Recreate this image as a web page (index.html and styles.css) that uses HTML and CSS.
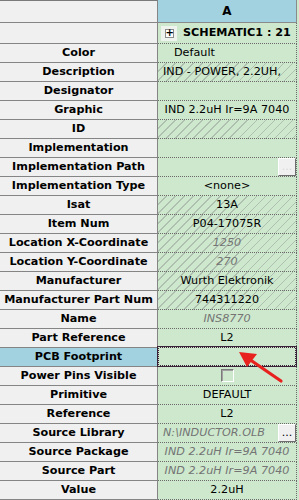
FILE: index.html
```html
<!DOCTYPE html>
<html lang="en">

<head>
	<meta charset="utf-8">
	<meta name="viewport" content="width=device-width, initial-scale=1.0">
	<title>Property Editor</title>
	<link rel="stylesheet" href="styles.css">
</head>

<body>
	<main class="sheet">
		<!-- column header -->
		<div class="name head"></div>
		<div class="val head">A</div>

		<!-- part row -->
		<div class="name part"></div>
		<div class="val part">
			<span class="expand"><span class="plus">+</span></span>
			<b>SCHEMATIC1 : 21</b>
		</div>

		<div class="name">Color</div>
		<div class="val left">Default</div>
		<div class="name">Description</div>
		<div class="val hatch desc">IND - POWER, 2.2UH,</div>
		<div class="name">Designator</div>
		<div class="val"></div>
		<div class="name">Graphic</div>
		<div class="val">IND 2.2uH Ir=9A 7040</div>
		<div class="name">ID</div>
		<div class="val hatch"></div>
		<div class="name">Implementation</div>
		<div class="val"></div>
		<div class="name">Implementation Path</div>
		<div class="val tool"><span class="text"></span><button class="dots off">...</button></div>
		<div class="name">Implementation Type</div>
		<div class="val">&lt;none&gt;</div>
		<div class="name">Isat</div>
		<div class="val hatch">13A</div>
		<div class="name">Item Num</div>
		<div class="val hatch">P04-17075R</div>
		<div class="name">Location X-Coordinate</div>
		<div class="val hatch grey">1250</div>
		<div class="name">Location Y-Coordinate</div>
		<div class="val hatch grey">270</div>
		<div class="name">Manufacturer</div>
		<div class="val hatch">Wurth Elektronik</div>
		<div class="name">Manufacturer Part Num</div>
		<div class="val hatch">744311220</div>
		<div class="name">Name</div>
		<div class="val grey">INS8770</div>
		<div class="name">Part Reference</div>
		<div class="val">L2</div>
		<div class="name selected">PCB Footprint</div>
		<div class="val focus"></div>
		<div class="name">Power Pins Visible</div>
		<div class="val"><span class="check"></span></div>
		<div class="name">Primitive</div>
		<div class="val">DEFAULT</div>
		<div class="name">Reference</div>
		<div class="val">L2</div>
		<div class="name">Source Library</div>
		<div class="val tool grey"><span class="text">N:\INDUCTOR.OLB</span><button class="dots">...</button></div>
		<div class="name">Source Package</div>
		<div class="val grey">IND 2.2uH Ir=9A 7040</div>
		<div class="name">Source Part</div>
		<div class="val grey">IND 2.2uH Ir=9A 7040</div>
		<div class="name">Value</div>
		<div class="val">2.2uH</div>
	</main>

	<!-- annotation arrow -->
	<svg class="arrow" width="299" height="500" viewBox="0 0 299 500">
		<line x1="281" y1="381" x2="249" y2="359" stroke="#e8231f" stroke-width="3.2" stroke-linecap="round" />
		<polygon points="239,352 257,354 247,367" fill="#e8231f" />
	</svg>
</body>

</html>
```

FILE: styles.css
```css
* {
	margin: 0;
	box-sizing: border-box;
}

body {
	width: 299px;
	height: 500px;
	overflow: hidden;
	background-color: #cde8cd;
	font-family: "DejaVu Sans", Verdana, sans-serif;
	font-size: 11.2px;
	color: #000;
	position: relative;
}

.sheet {
	display: grid;
	grid-template-columns: 158px 139px;
	grid-template-rows: 23px 21px;
	grid-auto-rows: 19px;
}

.name {
	background-color: #f0f0f0;
	border-right: 1px solid #858585;
	border-bottom: 1px solid #858585;
	font-weight: bold;
	text-align: center;
	line-height: 18px;
	white-space: nowrap;
	overflow: hidden;
}

.val {
	border-right: 1px dotted #6a6a6a;
	border-bottom: 1px dotted #6a6a6a;
	padding: 0 5px;
	text-align: center;
	line-height: 18px;
	white-space: nowrap;
	overflow: hidden;
}

.name.head {
	border-top: 1px solid #7a7a7a;
}

.val.head {
	background-color: #a2d1df;
	border-bottom: 1px solid #8a8a8a;
	border-right: 1px solid #8a8a8a;
	font-weight: bold;
	font-size: 12px;
	line-height: 22px;
}

.part {
	line-height: 20px;
}

.val.part {
	display: flex;
	align-items: center;
	padding: 0 0 0 3px;
	gap: 6px;
}

.expand {
	width: 16px;
	height: 15px;
	background-color: #eef3ee;
	display: flex;
	align-items: center;
	justify-content: center;
}

.plus {
	width: 9px;
	height: 9px;
	border: 1px solid #8c8c8c;
	background-color: #fff;
	font-size: 10px;
	line-height: 6px;
	font-weight: bold;
	text-align: center;
}

.left {
	text-align: left;
	padding-left: 16px;
}

.desc {
	text-align: left;
	padding: 0 0 0 5px;
}

.hatch {
	background-image: repeating-linear-gradient(135deg, transparent 0 5.3px, #b0c0b0 5.3px 6.4px);
}

.grey {
	color: #747474;
	font-style: italic;
}

.selected {
	background-color: #a2d1df;
}

.focus {
	position: relative;
	overflow: visible;
}

.focus::after {
	content: "";
	position: absolute;
	top: -2px;
	left: -1px;
	right: -1px;
	bottom: -1px;
	border: 2px solid #3a2339;
	outline: 1px dotted #cde8cd;
	outline-offset: -2px;
}

.tool {
	display: flex;
	padding-right: 0;
	text-align: left;
}

.tool .text {
	flex: 1;
	overflow: hidden;
}

.dots {
	width: 18px;
	height: 18px;
	padding: 0;
	background-color: #f0f0f0;
	border: 1px solid;
	border-color: #fff #6e6e6e #6e6e6e #fff;
	box-shadow: 1px 1px 0 #6e6e6e;
	font-family: "DejaVu Sans", sans-serif;
	font-size: 11px;
	font-style: normal;
	line-height: 14px;
	color: #000;
}

.dots.off {
	color: #d8d8d8;
}

.check {
	display: inline-block;
	width: 13px;
	height: 13px;
	margin-top: 2px;
	vertical-align: top;
	border: 1px solid;
	border-color: #7a7a7a #fff #fff #7a7a7a;
	box-shadow: inset 1px 1px 0 #a0a0a0;
}

.arrow {
	position: absolute;
	top: 0;
	left: 0;
	pointer-events: none;
}
```
